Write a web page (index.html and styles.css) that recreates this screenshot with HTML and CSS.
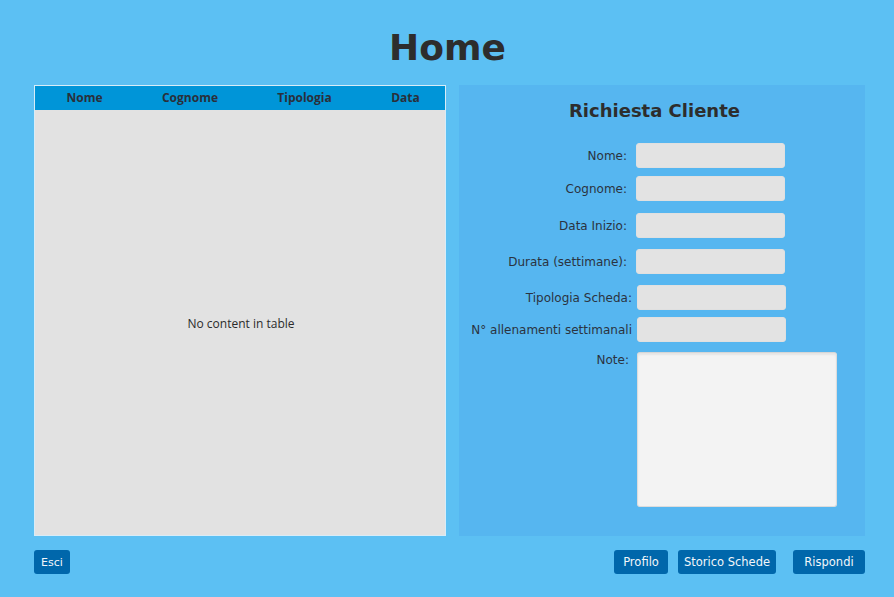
FILE: index.html
```html
<!DOCTYPE html>
<html lang="it">
<head>
<meta charset="utf-8">
<title>Home</title>
<link rel="stylesheet" href="styles.css">
</head>
<body>
<div class="app">
  <h1 class="title">Home</h1>
  <div class="main">
    <div class="table">
      <div class="thead">
        <div class="th c1">Nome</div>
        <div class="th c2">Cognome</div>
        <div class="th c3">Tipologia</div>
        <div class="th c4">Data</div>
      </div>
      <div class="tbody">No content in table</div>
    </div>
    <div class="panel">
      <h2 class="panel-title">Richiesta Cliente</h2>
      <div class="form">
        <div class="row r1"><label class="lbl">Nome:</label><input class="inp" type="text"></div>
        <div class="row r2"><label class="lbl">Cognome:</label><input class="inp" type="text"></div>
        <div class="row r3"><label class="lbl">Data Inizio:</label><input class="inp" type="text"></div>
        <div class="row r4"><label class="lbl">Durata (settimane):</label><input class="inp" type="text"></div>
        <div class="row r5"><label class="lbl lbl-wide">Tipologia Scheda:</label><input class="inp" type="text"></div>
        <div class="row r6"><label class="lbl lbl-wide">N° allenamenti settimanali</label><input class="inp" type="text"></div>
        <div class="row r7"><label class="lbl lbl-note">Note:</label><textarea class="note"></textarea></div>
      </div>
    </div>
  </div>
  <div class="footer">
    <button class="btn btn-esci">Esci</button>
    <div class="actions">
      <button class="btn btn-profilo">Profilo</button>
      <button class="btn btn-storico">Storico Schede</button>
      <button class="btn btn-rispondi">Rispondi</button>
    </div>
  </div>
</div>
</body>
</html>
```
FILE: styles.css
```css
* { box-sizing: border-box; }
html, body { margin: 0; padding: 0; }
body {
  background: #5cc0f3;
  width: 894px;
  height: 597px;
  overflow: hidden;
  font-family: "DejaVu Sans", Verdana, sans-serif;
  color: #2b2b2b;
}
.app {
  padding: 0 29px 0 34px;
}
.title {
  margin: 0;
  height: 85px;
  padding-top: 25px;
  text-align: center;
  font-size: 36px;
  line-height: 45px;
  font-weight: bold;
  color: #2d2d2d;
  padding-right: 4px;
}
.main {
  display: flex;
  gap: 13px;
  height: 451px;
}
.table {
  width: 412px;
  border: 1px solid #d8ecf7;
  background: #e2e2e2;
  display: flex;
  flex-direction: column;
}
.thead {
  display: flex;
  height: 24px;
  background: #0095d8;
}
.th {
  font-family: "Open Sans", "Noto Sans", sans-serif;
  font-weight: bold;
  font-size: 12px;
  line-height: 24px;
  text-align: center;
  color: #2a2f3a;
}
.c1 { width: 99px; }
.c2 { width: 112px; }
.c3 { width: 117px; }
.c4 { width: 82px; padding-left: 3px; }
.tbody {
  flex: 1;
  display: flex;
  align-items: center;
  justify-content: center;
  font-family: "Open Sans", "Noto Sans", sans-serif;
  font-size: 12px;
  color: #2b2b2b;
  padding-top: 1px;
  padding-left: 2px;
}
.panel {
  width: 406px;
  background: #56b6f0;
  padding-top: 14px;
}
.panel-title {
  margin: 0;
  text-align: center;
  font-size: 18px;
  line-height: 24px;
  font-weight: bold;
  color: #2d2d2d;
  padding-right: 15px;
}
.form {
  margin-top: 20px;
}
.row {
  display: flex;
  align-items: center;
  height: 25px;
}
.r2 { margin-top: 8px; }
.r3 { margin-top: 12px; }
.r4 { margin-top: 11px; }
.r5 { margin-top: 11px; }
.r6 { margin-top: 7px; }
.r7 { margin-top: 10px; align-items: flex-start; height: auto; }
.lbl {
  width: 170px;
  text-align: right;
  font-size: 12px;
  color: #2b3340;
  padding-right: 2px;
  white-space: nowrap;
}
.lbl-wide { width: 173px; padding-right: 0; }
.lbl-note { width: 172px; padding-top: 1px; }
.inp {
  margin-left: 7px;
  width: 149px;
  height: 25px;
  border: 1px solid #e0e0e0;
  border-radius: 3px;
  background: #e3e3e3;
  padding: 0;
}
.lbl-wide + .inp { margin-left: 5px; }
.note {
  margin-left: 6px;
  width: 200px;
  height: 155px;
  border: 1px solid #dcdcdc;
  border-top-color: #d6d6d6;
  border-radius: 3px;
  background: #f3f3f3;
  box-shadow: inset 0 2px 2px rgba(0,0,0,0.06);
  resize: none;
  padding: 0;
}
.footer {
  display: flex;
  justify-content: space-between;
  margin-top: 14px;
}
.actions {
  display: flex;
}
.btn {
  height: 24px;
  border: none;
  border-radius: 3px;
  background: #0067ab;
  color: #f2f6fa;
  font-family: "DejaVu Sans", Verdana, sans-serif;
  font-size: 11.5px;
  padding: 0;
  text-align: center;
  cursor: pointer;
}
.btn-esci { width: 36px; font-size: 11px; }
.btn-profilo { width: 54px; }
.btn-storico { width: 98px; margin-left: 10px; }
.btn-rispondi { width: 72px; margin-left: 17px; }
```
